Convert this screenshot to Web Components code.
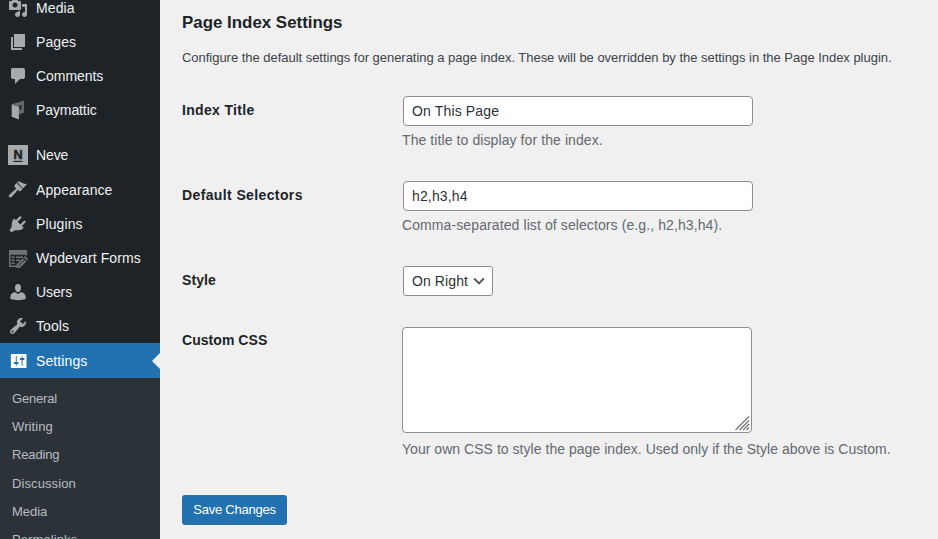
<!DOCTYPE html>
<html lang="en">
<head>
<meta charset="utf-8">
<title>Page Index Settings</title>
<style>
html,body{margin:0;height:100%;overflow:hidden}
body{font:14px/20px "Liberation Sans",Arial,sans-serif;background:#f0f0f0;color:#1d2327}
</style>
</head>
<body>
<admin-shell>
  <admin-menu slot="menu">
    <menu-item icon="media">Media</menu-item>
    <menu-item icon="pages">Pages</menu-item>
    <menu-item icon="comments" style="letter-spacing:-.05px">Comments</menu-item>
    <menu-item icon="paymattic" style="letter-spacing:-.1px">Paymattic</menu-item>
    <menu-item icon="neve" style="margin-top:11px;letter-spacing:-.1px">Neve</menu-item>
    <menu-item icon="appearance" style="margin-top:1px">Appearance</menu-item>
    <menu-item icon="plugins">Plugins</menu-item>
    <menu-item icon="forms">Wpdevart Forms</menu-item>
    <menu-item icon="users" style="letter-spacing:-.1px">Users</menu-item>
    <menu-item icon="tools">Tools</menu-item>
    <menu-item icon="settings" active>Settings</menu-item>
    <sub-menu>
      <sub-item style="letter-spacing:-.2px">General</sub-item>
      <sub-item>Writing</sub-item>
      <sub-item style="letter-spacing:-.15px">Reading</sub-item>
      <sub-item>Discussion</sub-item>
      <sub-item style="letter-spacing:-.05px">Media</sub-item>
      <sub-item>Permalinks</sub-item>
    </sub-menu>
  </admin-menu>
  <settings-form>
    <span slot="title">Page Index Settings</span>
    <span slot="intro">Configure the default settings for generating a page index. These will be overridden by the settings in the Page Index plugin.</span>
    <form-row label="Index Title" style="height:85px;--label-gap:.33px;--hint-gap:.09px"><text-field style="letter-spacing:.15px">On This Page</text-field><span slot="hint">The title to display for the index.</span></form-row>
    <form-row label="Default Selectors" style="height:85px;--label-gap:.38px;--hint-gap:.1px"><text-field style="letter-spacing:.15px">h2,h3,h4</text-field><span slot="hint">Comma-separated list of selectors (e.g., h2,h3,h4).</span></form-row>
    <form-row label="Style" style="height:60px;--label-gap:.1px"><select-field>On Right</select-field></form-row>
    <form-row label="Custom CSS" style="height:169px;--label-gap:.05px;--hint-gap:.036px;--hint-top:6px"><area-field></area-field><span slot="hint">Your own CSS to style the page index. Used only if the Style above is Custom.</span></form-row>
    <save-button>Save Changes</save-button>
  </settings-form>
</admin-shell>
<script>
const icons = {
  media:'<path d="M13 11V4c0-.55-.45-1-1-1h-1.67L9 1H5L3.67 3H2c-.55 0-1 .45-1 1v7c0 .55.45 1 1 1h10c.55 0 1-.45 1-1zM7 4.5c1.38 0 2.5 1.12 2.5 2.5S8.38 9.5 7 9.5 4.5 8.38 4.5 7 5.62 4.5 7 4.5zM14 6h5v10.5c0 1.38-1.12 2.5-2.5 2.5S14 17.88 14 16.5s1.12-2.5 2.5-2.5c.17 0 .34.02.5.05V9h-3V6zm-4 8.05V13h2v3.5c0 1.38-1.12 2.5-2.5 2.5S7 17.88 7 16.5 8.12 14 9.5 14c.17 0 .34.02.5.05z"/>',
  pages:'<path d="M6 2h11v13H6zM3 5h2v11h9v2H3z"/>',
  comments:'<path d="M4.500 2h10.500c1.100 0 2 .9 2 2v7c0 1.1-.9 2-2 2h-3l-5 5v-5H5c-1.1 0-2-.9-2-2V4c0-1.1.6-2 1.500-2z"/>',
  paymattic:'<path fill="#64686c" fill-rule="evenodd" d="M4.500 4 16 .5v12l-5 2.300V6.900L4.500 4.800zM11.500 5.500v4.300l2-.8V4.700z"/><path d="M3.700 4.300 10.900 7v12.400l-7.200-2.600z"/>',
  neve:'<path d="M0 0h20v20H0z"/><text x="10" y="13.500" text-anchor="middle" textLength="9" lengthAdjust="spacingAndGlyphs" font-family="Liberation Sans" font-weight="700" font-size="12.400" fill="#1d2327" stroke="#1d2327" stroke-width=".5">N</text><path fill="#1d2327" d="M5.500 15.800h9V17h-9z"/>',
  appearance:'<path d="M9.200 1.900c2-1.200 3.800.1 5.200 1.100 1.600.9 3 1.100 5 .8l-4.500 4.600z"/><path d="M8.300 2.700l6.300 6.300-2 2c-.5.5-1 .4-1.500-.1L9.900 9.800c-1 .8-1.700 1.900-2.500 2.900l-3.600 4c-.9.900-2 1.100-2.700.4s-.4-1.800.5-2.600l4-3.800c.9-.8 2-1.500 2.600-2.300L6.700 6.900c-.5-.5-.5-1 0-1.600z"/>',
  plugins:'<path d="M5.200 5.500l1-1.100 9.500 9.400-1 .9c-1.800 1.600-4.400 1.800-7.600 1.600L5 17.400c-.9.600-2.300.6-2.900-.1s-.4-1.700.2-2.400l1.400-2.100c-.2-3 .2-5.600 1.500-7.300z"/><path fill="none" stroke="#a7aaad" stroke-width="2.300" stroke-linecap="round" d="M8.800 6.900l3.500-3.500M13.100 11.200l3.400-3.400"/>',
  forms:'<g fill="#6e7276"><path fill-rule="evenodd" d="M1 2h18v5.500h-1.500V6.700H2.500v10.800H10V19H1z"/><path d="M3.500 8.500h3.200V10H3.500zm4.500 0h7V10H8zm-4.500 3h3.200V13H3.500zm4.500 0h4V13H8zm-4.500 3h3.200V16H3.500z"/><path d="m8.500 16.500 6.300-6.300 3.600 3.400-6.300 6.200-3.900.4zM15.700 9.300l1.300-1.200 3 3-.9 1.600z"/></g><path stroke="#1d2327" stroke-width=".9" d="m10.500 17.700 5.700-5.700"/>',
  users:'<path d="M10 10c-2.500 0-3-3.800-3-3.800C6.800 4.100 7.700 2 10 2s3.200 2.100 3 4.200c0 0-.500 3.800-3 3.800zm0 1.900 2.700-1.600c2.400 0 5 2.100 5 4.300v2.500s-3.700 1.100-7.700 1.100-7.600-1.100-7.600-1.100v-2.500c0-2.200 2.400-4.300 4.900-4.300z"/>',
  tools:'<path d="M16.680 9.770c-1.340 1.340-3.300 1.670-4.950.99l-5.410 6.520c-.99.99-2.590.99-3.580 0s-.99-2.590 0-3.570l6.520-5.420c-.68-1.650-.35-3.610.99-4.950 1.280-1.280 3.120-1.620 4.720-1.060l-2.890 2.890 2.820 2.820 2.860-2.870c.53 1.580.18 3.390-1.080 4.650zM3.810 16.210c.4.390 1.040.39 1.430 0 .4-.4.4-1.040 0-1.430-.39-.4-1.030-.4-1.430 0-.39.390-.39 1.030 0 1.430z"/>',
  settings:'<path transform="translate(.9) scale(.98 1)" d="M18 16V4c0-.55-.45-1-1-1H3c-.55 0-1 .45-1 1v12c0 .55.45 1 1 1h14c.55 0 1-.45 1-1zM8 11h1c.55 0 1 .45 1 1s-.45 1-1 1H8v1.500c0 .28-.22.500-.500.500s-.500-.22-.500-.500V13H6c-.55 0-1-.45-1-1s.45-1 1-1h1V5.500c0-.28.22-.500.500-.500s.500.22.500.500V11zm5-2h-1c-.55 0-1-.45-1-1s.45-1 1-1h1V5.500c0-.28.22-.500.500-.500s.500.22.500.500V7h1c.55 0 1 .45 1 1s-.45 1-1 1h-1v5.500c0 .28-.22.500-.500.500s-.500-.22-.500-.500V9z"/>'
};
function define(name, render) {
  customElements.define(name, class extends HTMLElement {
    constructor() { super(); this.attachShadow({mode:'open'}); }
    connectedCallback() { this.shadowRoot.innerHTML = render(this); }
  });
}
define('admin-shell', () => `<style>:host{display:grid;grid-template-columns:160px 1fr;height:539px;overflow:hidden}</style><slot name="menu"></slot><slot></slot>`);
define('admin-menu', () => `<style>:host{display:flex;flex-direction:column;background:#1d2327;margin-top:-9px;height:548px;min-height:0}</style><slot></slot>`);
define('menu-item', el => `<style>
:host{display:flex;flex:none;align-items:center;height:34px;padding-left:8px;gap:8px;color:#f0f0f1;fill:#a7aaad;white-space:nowrap;letter-spacing:.1px}
:host([active]){height:35px;background:#2271b1;color:#fff;fill:#fff}
svg{display:block;flex:none;width:20px;height:20px}
.arrow{margin-left:auto;border:8px solid transparent;border-right-color:#f0f0f0;border-left:0}
</style><svg viewBox="0 0 20 20">${icons[el.getAttribute('icon')]}</svg><span><slot></slot></span>${el.hasAttribute('active') ? '<i class="arrow"></i>' : ''}`);
define('sub-menu', () => `<style>:host{display:flex;flex:1 0 auto;flex-direction:column;background:#2c3338;padding-top:7px}</style><slot></slot>`);
define('sub-item', () => `<style>:host{display:flex;align-items:center;height:28.2px;padding-left:12px;font-size:13px;color:#b8bcc0;letter-spacing:.1px}</style><slot></slot>`);
define('settings-form', () => `<style>
:host{display:flex;flex-direction:column;padding:11px 0 0 22px;white-space:nowrap}
h2{margin:0;font-size:16.9px;line-height:24px;font-weight:700}
p{margin:13px 0 28px;font-size:13px;line-height:20px;height:20px;color:#3c434a;letter-spacing:-.028px}
</style><h2><slot name="title"></slot></h2><p><slot name="intro"></slot></p><slot></slot>`);
define('form-row', el => `<style>
:host{display:grid;grid-template-columns:220px 1fr;flex:none}
.label{font-weight:700;padding-top:4px;letter-spacing:var(--label-gap,0)}
.hint{color:#646970;line-height:20px;margin-top:var(--hint-top,4px);letter-spacing:var(--hint-gap,0)}
</style><div class="label">${el.getAttribute('label')}</div><div><slot></slot><div class="hint"><slot name="hint"></slot></div></div>`);
define('text-field', () => `<style>:host{display:flex;align-items:center;box-sizing:border-box;width:350px;height:30px;margin-left:1px;padding:0 8px;border:1px solid #8c8f94;border-radius:4px;background:#fff;color:#2c3338}</style><slot></slot>`);
define('select-field', () => `<style>:host{display:flex;align-items:center;box-sizing:border-box;width:90px;height:30px;margin-left:1px;padding:0 7px 0 8px;border:1px solid #8c8f94;border-radius:3px;background:#fff;color:#2c3338;justify-content:space-between;letter-spacing:.1px}svg{width:12px;height:12px}</style><slot></slot><svg viewBox="0 0 12 12"><path d="M1.200 3.500 6 8.300l4.800-4.800" fill="none" stroke="#50555a" stroke-width="1.900"/></svg>`);
define('area-field', () => `<style>:host{display:flex;align-items:flex-end;justify-content:flex-end;box-sizing:border-box;width:350px;height:106px;margin-top:1px;border:1px solid #8c8f94;border-radius:4px;background:#fff}svg{width:16px;height:16px;margin:0 1px 1px 0}</style><svg viewBox="0 0 16 16"><path d="M1.500 15 15 1.500M5.500 15 15 5.500M9 15l6-6M12.500 15l2.500-2.500" stroke="#777" stroke-width="1.300"/></svg>`);
define('save-button', () => `<style>:host{display:flex;align-items:center;justify-content:center;width:105px;height:30px;border-radius:3px;background:#2271b1;color:#fff;font-size:13px;letter-spacing:-.23px}</style><slot></slot>`);
</script>
</body>
</html>
